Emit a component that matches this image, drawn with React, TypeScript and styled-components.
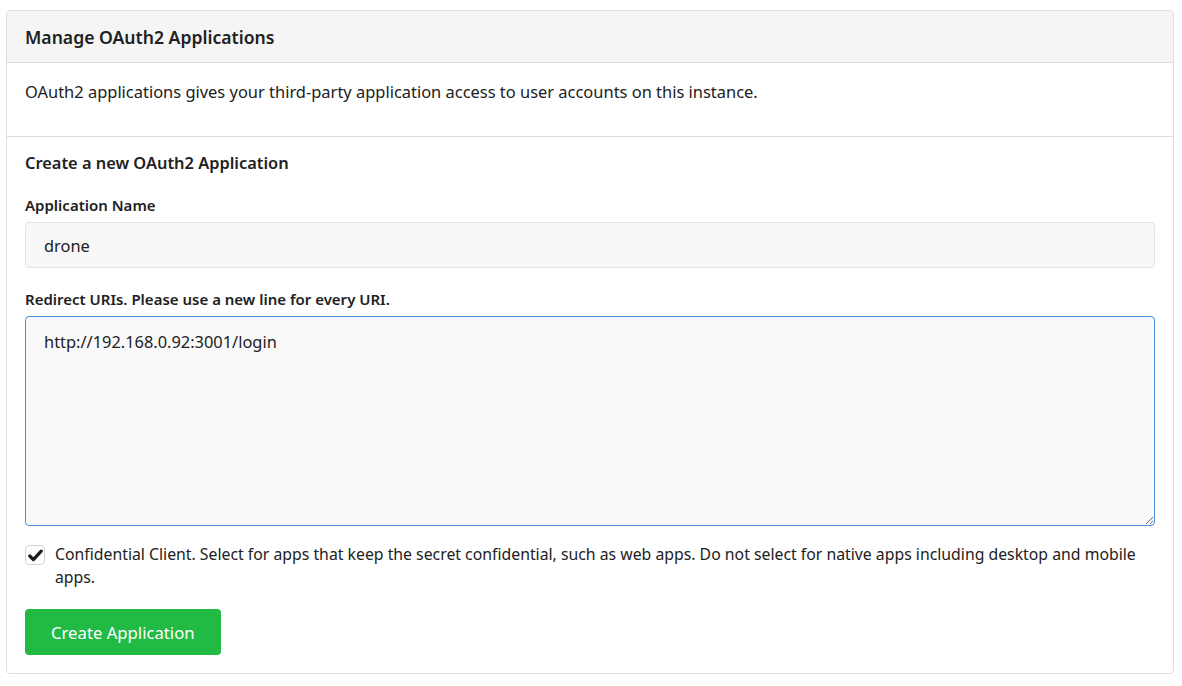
import React from "react";
import styled, { createGlobalStyle } from "styled-components";

const Global = createGlobalStyle`
  html, body { margin: 0; padding: 0; background: #ffffff; }
  body { font-family: "Noto Sans", "Open Sans", sans-serif; color: #212121; }
  * { box-sizing: border-box; }
`;

const Page = styled.div`
  padding: 10px 8px 12px 6px;
`;

const Card = styled.div`
  border: 1px solid #dedede;
  border-radius: 4px;
  background: #ffffff;
`;

const Header = styled.h4`
  margin: 0;
  height: 52px;
  display: flex;
  align-items: center;
  padding: 0 18px;
  background: #f5f5f5;
  border-bottom: 1px solid #dedede;
  font-size: 17.6px;
  font-weight: 600;
  color: #212121;
  border-radius: 4px 4px 0 0;
`;

const Section = styled.div<{ $divider?: boolean }>`
  padding: ${(p) => (p.$divider ? "17px 18px 0" : "15px 18px 18px")};
  height: ${(p) => (p.$divider ? "74px" : "auto")};
  border-bottom: ${(p) => (p.$divider ? "1px solid #dedede" : "none")};
`;

const Description = styled.p`
  margin: 0;
  font-size: 16.45px;
  line-height: 24px;
  color: #212121;
`;

const SubTitle = styled.h5`
  margin: 0 0 21px;
  font-size: 16.4px;
  line-height: 22px;
  font-weight: 600;
  color: #212121;
`;

const Field = styled.div`
  display: flex;
  flex-direction: column;
  gap: 7px;
  margin-bottom: 21px;
`;

const Label = styled.label`
  font-size: 15px;
  line-height: 20px;
  font-weight: 600;
  color: #212121;
`;

const Input = styled.input`
  height: 46px;
  width: 100%;
  padding: 0 18px;
  background: #f8f8f8;
  border: 1px solid #e2e2e2;
  border-radius: 4px;
  font-family: inherit;
  font-size: 16.4px;
  color: #212121;
  outline: none;
`;

const TextArea = styled.textarea`
  display: block;
  height: 210px;
  width: 100%;
  padding: 14px 18px;
  background: #f9f9f9;
  border: 1px solid #4a90d9;
  border-radius: 4px;
  font-family: inherit;
  font-size: 16.4px;
  line-height: 22px;
  color: #212121;
  outline: none;
  resize: vertical;
`;

const CheckRow = styled.div`
  display: flex;
  align-items: flex-start;
  gap: 10px;
  margin-top: -4px;
`;

const CheckBox = styled.span`
  flex: none;
  width: 20px;
  height: 20px;
  margin-top: 2px;
  border: 1px solid #d4d4d5;
  border-radius: 4px;
  background: #ffffff;
  display: flex;
  align-items: center;
  justify-content: center;
`;

const CheckText = styled.span`
  font-size: 15.8px;
  line-height: 23px;
  color: #212121;
`;

const Button = styled.button`
  display: block;
  margin-top: 20px;
  height: 46px;
  padding: 0 26px;
  background: #21ba45;
  color: #ffffff;
  border: none;
  border-radius: 4px;
  font-family: inherit;
  font-size: 16.7px;
  cursor: pointer;
`;

export default function App() {
  return (
    <>
      <Global />
      <Page>
        <Card>
          <Header>Manage OAuth2 Applications</Header>
          <Section $divider>
            <Description>
              OAuth2 applications gives your third-party application access to user accounts on this instance.
            </Description>
          </Section>
          <Section>
            <SubTitle>Create a new OAuth2 Application</SubTitle>
            <Field>
              <Label>Application Name</Label>
              <Input defaultValue="drone" />
            </Field>
            <Field>
              <Label>Redirect URIs. Please use a new line for every URI.</Label>
              <TextArea defaultValue="http://192.168.0.92:3001/login" spellCheck={false} />
            </Field>
            <CheckRow>
              <CheckBox>
                <svg width="15" height="13" viewBox="0 0 15 13">
                  <path d="M1.8 7 L5.4 10.6 L13.2 2.2" fill="none" stroke="#1b1b1b" strokeWidth="3.2" strokeLinecap="round" strokeLinejoin="round" />
                </svg>
              </CheckBox>
              <CheckText>
                Confidential Client. Select for apps that keep the secret confidential, such as web apps. Do not select for native apps including desktop and mobile apps.
              </CheckText>
            </CheckRow>
            <Button>Create Application</Button>
          </Section>
        </Card>
      </Page>
    </>
  );
}
